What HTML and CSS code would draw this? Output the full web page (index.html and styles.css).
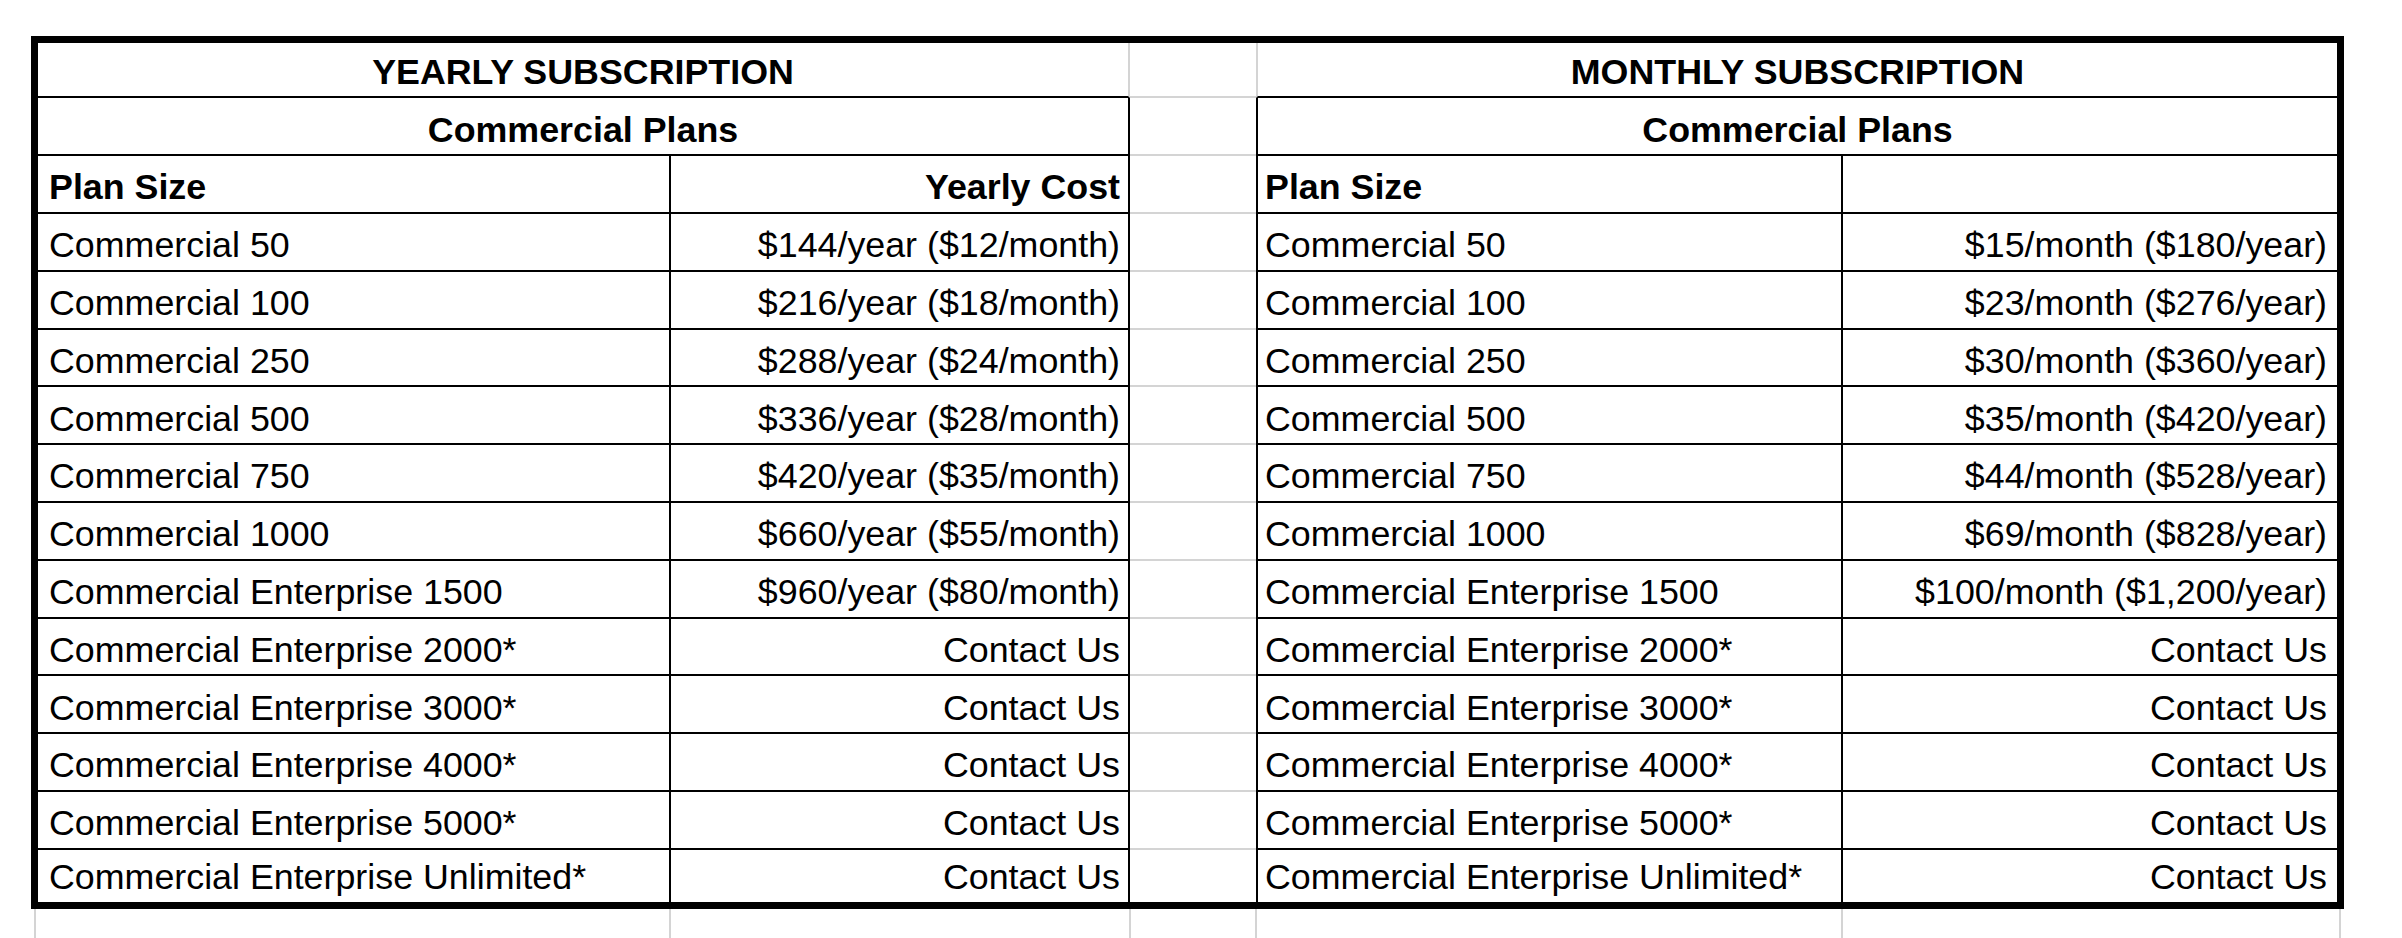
FILE: index.html
```html
<!DOCTYPE html>
<html lang="en">
<head>
<meta charset="utf-8">
<title>Subscription Plans</title>
<link rel="stylesheet" href="styles.css">
</head>
<body>
<div class="sheet">
  <div class="row r1">
    <div class="c lm g-right b">YEARLY SUBSCRIPTION</div>
    <div class="c cg"></div>
    <div class="c rm g-left b">MONTHLY SUBSCRIPTION</div>
  </div>
  <div class="row">
    <div class="c lm k-right b">Commercial Plans</div>
    <div class="c cg"></div>
    <div class="c rm k-left b">Commercial Plans</div>
  </div>
  <div class="row">
    <div class="c ca b">Plan Size</div>
    <div class="c cb b">Yearly Cost</div>
    <div class="c cg"></div>
    <div class="c cd b">Plan Size</div>
    <div class="c ce b"></div>
  </div>
  <div class="row">
    <div class="c ca">Commercial 50</div>
    <div class="c cb">$144/year ($12/month)</div>
    <div class="c cg"></div>
    <div class="c cd">Commercial 50</div>
    <div class="c ce">$15/month ($180/year)</div>
  </div>
  <div class="row">
    <div class="c ca">Commercial 100</div>
    <div class="c cb">$216/year ($18/month)</div>
    <div class="c cg"></div>
    <div class="c cd">Commercial 100</div>
    <div class="c ce">$23/month ($276/year)</div>
  </div>
  <div class="row">
    <div class="c ca">Commercial 250</div>
    <div class="c cb">$288/year ($24/month)</div>
    <div class="c cg"></div>
    <div class="c cd">Commercial 250</div>
    <div class="c ce">$30/month ($360/year)</div>
  </div>
  <div class="row">
    <div class="c ca">Commercial 500</div>
    <div class="c cb">$336/year ($28/month)</div>
    <div class="c cg"></div>
    <div class="c cd">Commercial 500</div>
    <div class="c ce">$35/month ($420/year)</div>
  </div>
  <div class="row">
    <div class="c ca">Commercial 750</div>
    <div class="c cb">$420/year ($35/month)</div>
    <div class="c cg"></div>
    <div class="c cd">Commercial 750</div>
    <div class="c ce">$44/month ($528/year)</div>
  </div>
  <div class="row">
    <div class="c ca">Commercial 1000</div>
    <div class="c cb">$660/year ($55/month)</div>
    <div class="c cg"></div>
    <div class="c cd">Commercial 1000</div>
    <div class="c ce">$69/month ($828/year)</div>
  </div>
  <div class="row">
    <div class="c ca">Commercial Enterprise 1500</div>
    <div class="c cb">$960/year ($80/month)</div>
    <div class="c cg"></div>
    <div class="c cd">Commercial Enterprise 1500</div>
    <div class="c ce">$100/month ($1,200/year)</div>
  </div>
  <div class="row">
    <div class="c ca">Commercial Enterprise 2000*</div>
    <div class="c cb">Contact Us</div>
    <div class="c cg"></div>
    <div class="c cd">Commercial Enterprise 2000*</div>
    <div class="c ce">Contact Us</div>
  </div>
  <div class="row">
    <div class="c ca">Commercial Enterprise 3000*</div>
    <div class="c cb">Contact Us</div>
    <div class="c cg"></div>
    <div class="c cd">Commercial Enterprise 3000*</div>
    <div class="c ce">Contact Us</div>
  </div>
  <div class="row">
    <div class="c ca">Commercial Enterprise 4000*</div>
    <div class="c cb">Contact Us</div>
    <div class="c cg"></div>
    <div class="c cd">Commercial Enterprise 4000*</div>
    <div class="c ce">Contact Us</div>
  </div>
  <div class="row">
    <div class="c ca">Commercial Enterprise 5000*</div>
    <div class="c cb">Contact Us</div>
    <div class="c cg"></div>
    <div class="c cd">Commercial Enterprise 5000*</div>
    <div class="c ce">Contact Us</div>
  </div>
  <div class="row last">
    <div class="c ca">Commercial Enterprise Unlimited*</div>
    <div class="c cb">Contact Us</div>
    <div class="c cg"></div>
    <div class="c cd">Commercial Enterprise Unlimited*</div>
    <div class="c ce">Contact Us</div>
  </div>
</div>
<div class="below">
  <div class="gl w1"></div>
  <div class="gl w2"></div>
  <div class="gl w3"></div>
  <div class="gl w4"></div>
  <div class="gl w5"></div>
  <div class="gl w6"></div>
</div>
</body>
</html>
```

FILE: styles.css
```css
* {
  box-sizing: border-box;
}

html, body {
  margin: 0;
  padding: 0;
  background: #ffffff;
}

body {
  font-family: "Liberation Sans", Arial, sans-serif;
  font-size: 35.8px;
  line-height: 40px;
  color: #000000;
  overflow: hidden;
}

.sheet {
  margin: 36px 0 0 31px;
  width: 2313px;
  border: 7px solid #000000;
}

.row {
  display: flex;
  height: 57.8px;
}

.row.r1 {
  height: 55.4px;
}

.row.last {
  height: 52px;
}

.c {
  display: flex;
  align-items: flex-end;
  white-space: nowrap;
  border-bottom: 2px solid #000000;
  padding-bottom: 4.5px;
}

.row.last .c {
  border-bottom: none;
}

.b {
  font-weight: bold;
}

.ca {
  width: 633px;
  padding-left: 11px;
  border-right: 2px solid #000000;
}

.cb {
  width: 459px;
  justify-content: flex-end;
  padding-right: 8px;
  border-right: 2px solid #000000;
}

.cg {
  width: 126px;
  border-bottom-color: #d4d4d4;
}

.cd {
  width: 587px;
  padding-left: 7px;
  border-left: 2px solid #000000;
  border-right: 2px solid #000000;
}

.ce {
  width: 494px;
  justify-content: flex-end;
  padding-right: 10px;
}

.lm {
  width: 1092px;
  justify-content: center;
}

.rm {
  width: 1081px;
  justify-content: center;
}

.g-right {
  border-right: 2px solid #d4d4d4;
}

.g-left {
  border-left: 2px solid #d4d4d4;
}

.k-right {
  border-right: 2px solid #000000;
}

.k-left {
  border-left: 2px solid #000000;
}

.below {
  display: flex;
  height: 40px;
  margin-left: 34px;
}

.gl {
  height: 100%;
  border-left: 2px solid #d4d4d4;
}

.w1 { width: 635px; }
.w2 { width: 460px; }
.w3 { width: 126px; }
.w4 { width: 586px; }
.w5 { width: 498px; }
.w6 { width: 2px; }
```
